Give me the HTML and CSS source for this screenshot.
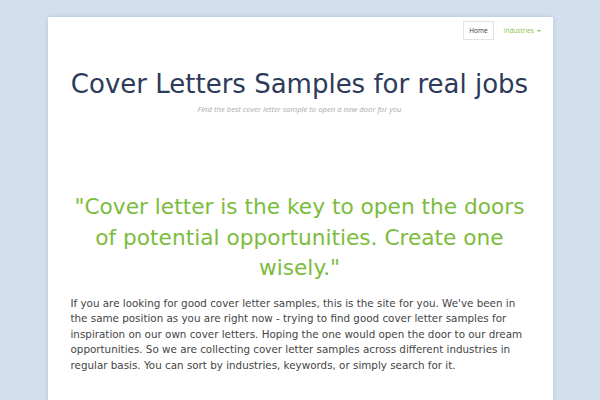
FILE: index.html
```html
<!DOCTYPE html>
<html>
<head>
<meta charset="utf-8">
<link rel="stylesheet" href="styles.css">
</head>
<body>
<div class="page">
  <nav class="nav">
    <a class="nav-home">Home</a>
    <a class="nav-ind">Industries <span class="caret"></span></a>
  </nav>
  <header class="header">
    <h1 class="title">Cover Letters Samples for real jobs</h1>
    <p class="tagline">Find the best cover letter sample to open a new door for you</p>
  </header>
  <h2 class="quote">"Cover letter is the key to open the doors of potential opportunities. Create one wisely."</h2>
  <p class="intro">If you are looking for good cover letter samples, this is the site for you. We've been in the same position as you are right now - trying to find good cover letter samples for inspiration on our own cover letters. Hoping the one would open the door to our dream opportunities. So we are collecting cover letter samples across different industries in regular basis. You can sort by industries, keywords, or simply search for it.</p>
</div>
</body>
</html>
```
FILE: styles.css
```css
html, body { margin: 0; padding: 0; }
body {
  background: #d3dfee;
  font-family: "DejaVu Sans", sans-serif;
  height: 400px;
  overflow: hidden;
}
.page {
  width: 505px;
  margin: 17px auto 0;
  background: #fff;
  box-shadow: 0 0 4px rgba(120,140,170,0.35);
  padding: 4px 24px 40px 23px;
  box-sizing: border-box;
  min-height: 400px;
}
.nav {
  display: flex;
  justify-content: flex-end;
  align-items: center;
  gap: 10px;
  margin-right: -12px;
}
.nav-home {
  font-family: "Open Sans", sans-serif;
  font-size: 6.5px;
  color: #333;
  border: 1px solid #e3e3e3;
  padding: 5px 5px;
  line-height: 7px;
}
.nav-ind {
  font-family: "Open Sans", sans-serif;
  font-size: 6.5px;
  color: #8bc34a;
  padding: 5px 0;
  line-height: 7px;
}
.caret {
  display: inline-block;
  width: 0; height: 0;
  border-left: 2px solid transparent;
  border-right: 2px solid transparent;
  border-top: 2px solid #8bc34a;
  vertical-align: middle;
  margin-left: 1px;
}
.header { text-align: center; }
.title {
  font-weight: normal;
  font-size: 26px;
  color: #2d3a5a;
  margin: 28px 0 0;
  line-height: 32px;
}
.tagline {
  font-family: "Open Sans", sans-serif;
  font-style: italic;
  font-size: 7.7px;
  line-height: 11px;
  color: #aaa;
  margin: 4px 0 0;
}
.quote {
  font-weight: normal;
  text-align: center;
  color: #7cbc3e;
  font-size: 21.7px;
  line-height: 30.5px;
  margin: 77px 0 0;
}
.intro {
  font-size: 10.35px;
  line-height: 15.5px;
  color: #444;
  margin: 12px 6px 0 0;
}
```
